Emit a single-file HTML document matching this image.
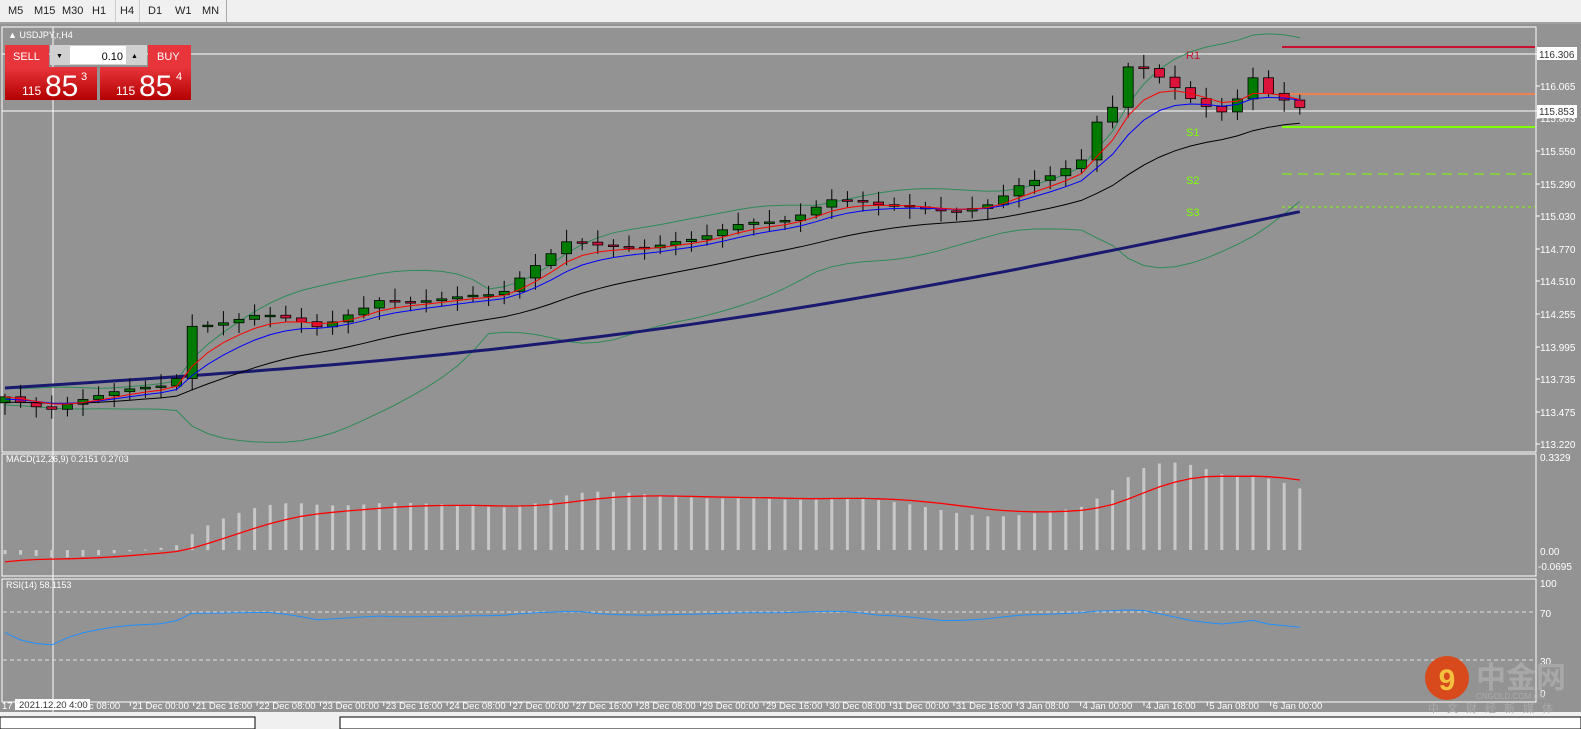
<!DOCTYPE html>
<html><head><meta charset="utf-8"><style>
body{margin:0;width:1581px;height:729px;overflow:hidden;background:#939393;font-family:"Liberation Sans",sans-serif}
#tb{position:absolute;left:0;top:0;width:1581px;height:22px;background:#f0f0f0;border-bottom:2px solid #a0a0a0;font-size:11px;color:#222}
#tb span{position:absolute;top:5px}
svg{position:absolute;left:0;top:0}
</style></head><body>
<div id="tb"><span style="left:8px">M5</span><span style="left:34px">M15</span><span style="left:62px">M30</span><span style="left:92px">H1</span><span style="left:120px">H4</span><span style="left:148px">D1</span><span style="left:175px">W1</span><span style="left:202px">MN</span>
<div style="position:absolute;left:115px;top:0;width:1px;height:22px;background:#ccc"></div><div style="position:absolute;left:139px;top:0;width:1px;height:22px;background:#ccc"></div><div style="position:absolute;left:226px;top:0;width:1px;height:22px;background:#aaa"></div></div>
<svg id="s" width="1581" height="729" xmlns="http://www.w3.org/2000/svg" font-family="Liberation Sans, sans-serif"></svg>
<script>
const s=document.getElementById('s');let h='';
const R=1536;
h+=`<rect x="2" y="27" width="${R-2}" height="425" fill="none" stroke="#fff"/>`;
h+=`<rect x="2" y="454" width="${R-2}" height="122" fill="none" stroke="#fff"/>`;
h+=`<rect x="2" y="579" width="${R-2}" height="123" fill="none" stroke="#fff"/>`;
h+=`<rect x="0" y="712" width="1581" height="17" fill="#f0f0f0"/><rect x="0" y="717" width="255" height="12" fill="#fff" stroke="#000"/><rect x="340" y="717" width="1241" height="12" fill="#fff" stroke="#000"/>`;
const pr=[["116.306",54],["116.065",86],["115.803",118],["115.550",151],["115.290",184],["115.030",216],["114.770",249],["114.510",281],["114.255",314],["113.995",347],["113.735",379],["113.475",412],["113.220",444]];
pr.forEach(p=>{h+=`<line x1="${R}" y1="${p[1]}" x2="${R+4}" y2="${p[1]}" stroke="#fff"/><text x="1540" y="${p[1]+4}" fill="#fff" font-size="10">${p[0]}</text>`});
h+=`<rect x="1537" y="47" width="40" height="13" fill="#fff"/><text x="1539" y="58" font-size="10" fill="#333">116.306</text>`;
h+=`<rect x="1537" y="105" width="40" height="13" fill="#fff"/><text x="1539" y="115" font-size="10" fill="#333">115.853</text>`;
h+=`<line x1="2" y1="54" x2="1537" y2="54" stroke="#fff"/><line x1="2" y1="111" x2="1537" y2="111" stroke="#fff"/>`;
h+=`<line x1="53" y1="27" x2="53" y2="712" stroke="#fff"/>`;
h+=`<line x1="1282" y1="47" x2="1535" y2="47" stroke="#c8102e" stroke-width="2"/><line x1="1282" y1="94" x2="1535" y2="94" stroke="#f08050" stroke-width="2"/><line x1="1282" y1="127" x2="1535" y2="127" stroke="#7fff00" stroke-width="2"/><line x1="1282" y1="174" x2="1535" y2="174" stroke="#7fff00" stroke-dasharray="10 6"/><line x1="1282" y1="207" x2="1535" y2="207" stroke="#7fff00" stroke-dasharray="3 3"/>`;
h+=`<text x="1186" y="59" fill="#c8102e" font-size="11">R1</text><text x="1186" y="136" fill="#7fff00" font-size="11">S1</text><text x="1186" y="184" fill="#7fff00" font-size="11">S2</text><text x="1186" y="216" fill="#7fff00" font-size="11">S3</text>`;
const kf=[[5,392],[50,408],[100,400],[175,382],[190,322],[260,315],[320,332],[380,296],[430,298],[500,300],[540,262],[570,235],[650,250],[700,243],[745,220],[790,215],[830,200],[880,210],[950,208],[990,200],[1020,185],[1050,180],[1080,168],[1097,125],[1110,115],[1130,60],[1145,65],[1165,75],[1190,95],[1210,108],[1225,115],[1240,100],[1255,80],[1270,100],[1290,105],[1303,110]];
function itp(x){for(let i=0;i<kf.length-1;i++){if(x<=kf[i+1][0]){const t=(x-kf[i][0])/(kf[i+1][0]-kf[i][0]);return kf[i][1]+t*(kf[i+1][1]-kf[i][1]);}}return 110;}
let xs=[],cl=[];for(let x=5;x<=1304;x+=15.6){xs.push(x);cl.push(itp(x)+Math.sin(x*0.37)*5);}
const N=xs.length;
function ema(a,n,init){let k=2/(n+1),e=init??a[0],r=[];a.forEach(v=>{e=e+k*(v-e);r.push(e)});return r;}
const e5=ema(cl,5),e10=ema(cl,8,cl[0]+3),e30=ema(cl,21,cl[0]+6);
let up=[],lo=[];
for(let i=0;i<N;i++){let w=[];for(let j=i-19;j<=i;j++)w.push(j<0?cl[0]+Math.sin(j)*6:cl[j]);const m=w.reduce((a,b)=>a+b)/20;const sd=Math.sqrt(w.reduce((a,b)=>a+(b-m)*(b-m),0)/20);up.push(m-2*sd);lo.push(m+2*sd);}
let prev=cl[0]+6;
let P=a=>a.map((v,i)=>`${xs[i].toFixed(1)},${v.toFixed(1)}`).join(' ');
let nav=xs.map(x=>`${x.toFixed(1)},${(388-(x-5)/1298*177+Math.sin((x-5)/1298*Math.PI)*30).toFixed(1)}`).join(' ');
h+=`<polyline points="${P(up)}" fill="none" stroke="#2e8b57"/><polyline points="${P(lo)}" fill="none" stroke="#2e8b57"/>`;
h+=`<polyline points="${nav}" fill="none" stroke="#191970" stroke-width="3"/>`;
xs.forEach((x,i)=>{const o=prev,c=cl[i];const t=Math.min(o,c)-3-Math.abs(Math.sin(i*1.7))*9,b=Math.max(o,c)+3+Math.abs(Math.cos(i*1.3))*9;
h+=`<line x1="${x}" y1="${t}" x2="${x}" y2="${b}" stroke="#000"/>`;
const hh=Math.max(1.5,Math.abs(c-o));h+=`<rect x="${x-5}" y="${Math.min(o,c)}" width="10" height="${hh}" fill="${c<o?'#007a00':'#dc143c'}" stroke="#000" stroke-width="0.8"/>`;
prev=c;});
h+=`<polyline points="${P(e30)}" fill="none" stroke="#000"/><polyline points="${P(e10)}" fill="none" stroke="#0000ff"/><polyline points="${P(e5)}" fill="none" stroke="#f00"/>`;
const a12=ema(cl,12),a26=ema(cl,26,cl[0]-2);const mac=a12.map((v,i)=>(a26[i]-v)/126.4);const sig=ema(mac,9,-0.05);
const my=v=>550-v*(92/0.3329);
mac.forEach((v,i)=>{const y=my(v);h+=`<rect x="${xs[i]-1.5}" y="${Math.min(y,550)}" width="3" height="${Math.max(1,Math.abs(y-550))}" fill="#c8c8c8"/>`});
h+=`<polyline points="${P(sig.map(my))}" fill="none" stroke="#f00" stroke-width="1.3"/>`;
h+=`<text x="6" y="462" fill="#fff" font-size="9">MACD(12,26,9) 0.2151 0.2703</text><text x="1540" y="461" fill="#fff" font-size="10">0.3329</text><text x="1540" y="555" fill="#fff" font-size="10">0.00</text><text x="1538" y="570" fill="#fff" font-size="10">-0.0695</text>`;
let g=0.5,l=0.5,rsi=[];for(let i=0;i<N;i++){const d=i?cl[i-1]-cl[i]:0;g=(g*13+Math.max(d,0))/14;l=(l*13+Math.max(-d,0))/14;rsi.push(100-100/(1+g/l));}
rsi=rsi.map(v=>55+(v-55)*0.4);
h+=`<line x1="3" y1="612" x2="${R}" y2="612" stroke="#ddd" stroke-dasharray="4 3"/><line x1="3" y1="660" x2="${R}" y2="660" stroke="#ddd" stroke-dasharray="4 3"/>`;
h+=`<polyline points="${P(rsi.map(v=>696-v*1.2))}" fill="none" stroke="#1e90ff"/>`;
h+=`<text x="6" y="588" fill="#fff" font-size="9">RSI(14) 58.1153</text><text x="1540" y="587" fill="#fff" font-size="10">100</text><text x="1540" y="617" fill="#fff" font-size="10">70</text><text x="1540" y="665" fill="#fff" font-size="10">30</text><text x="1540" y="697" fill="#fff" font-size="10">0</text>`;
const tl=["c 08:00","21 Dec 00:00","21 Dec 16:00","22 Dec 08:00","23 Dec 00:00","23 Dec 16:00","24 Dec 08:00","27 Dec 00:00","27 Dec 16:00","28 Dec 08:00","29 Dec 00:00","29 Dec 16:00","30 Dec 08:00","31 Dec 00:00","31 Dec 16:00","3 Jan 08:00","4 Jan 00:00","4 Jan 16:00","5 Jan 08:00","6 Jan 00:00"];
tl.forEach((t,i)=>{const x=67+i*63.35;h+=`<line x1="${x}" y1="702" x2="${x}" y2="706" stroke="#fff"/><text x="${i?x+2:x+22}" y="709" fill="#fff" font-size="9.5">${t}</text>`});
h+=`<text x="2" y="709" fill="#fff" font-size="9.5">17</text><rect x="15" y="699" width="75" height="11" fill="#fff"/><text x="19" y="708" fill="#333" font-size="9.5">2021.12.20 4:00</text>`;
h+=`<text x="8" y="38" fill="#fff" font-size="9">▲ USDJPY,r,H4</text>`;
h+=`<defs><linearGradient id="g" x1="0" y1="0" x2="0" y2="1"><stop offset="0" stop-color="#e8353c"/><stop offset="1" stop-color="#b30000"/></linearGradient></defs>`;
h+=`<rect x="5" y="45" width="44" height="22" fill="#e8353c"/><text x="13" y="60" fill="#fff" font-size="11">SELL</text>`;
h+=`<rect x="148" y="45" width="43" height="22" fill="#e8353c"/><text x="157" y="60" fill="#fff" font-size="11">BUY</text>`;
h+=`<rect x="50" y="45" width="97" height="20" fill="#d0d0d0"/><rect x="70" y="46" width="56" height="18" fill="#fff"/><text x="123" y="60" fill="#000" font-size="11" text-anchor="end">0.10</text><text x="56" y="58" font-size="7">▼</text><text x="131" y="58" font-size="7">▲</text>`;
h+=`<rect x="5" y="67" width="92" height="33" fill="url(#g)"/><rect x="100" y="67" width="91" height="33" fill="url(#g)"/>`;
h+=`<text x="22" y="95" fill="#fff" font-size="12">115</text><text x="45" y="96" fill="#fff" font-size="30">85</text><text x="81" y="80" fill="#fff" font-size="11">3</text>`;
h+=`<text x="116" y="95" fill="#fff" font-size="12">115</text><text x="139" y="96" fill="#fff" font-size="30">85</text><text x="176" y="80" fill="#fff" font-size="11">4</text>`;
h+=`<circle cx="1447" cy="678" r="22" fill="#d84a1b"/><text x="1447" y="690" text-anchor="middle" font-size="30" fill="#f5c040" font-weight="bold">9</text>`;
h+=`<text x="1476" y="688" font-size="30" fill="#a8a8a8" font-weight="bold" font-family="Noto Sans CJK SC, sans-serif">中金网</text><text x="1476" y="699" font-size="8" fill="#aaa">CNGOLD.COM.CN</text><text x="1428" y="712" font-size="11" fill="#aaa" letter-spacing="8" font-family="Noto Sans CJK SC, sans-serif">中文财经新媒体</text>`;
s.innerHTML=h;
</script>
</body></html>
